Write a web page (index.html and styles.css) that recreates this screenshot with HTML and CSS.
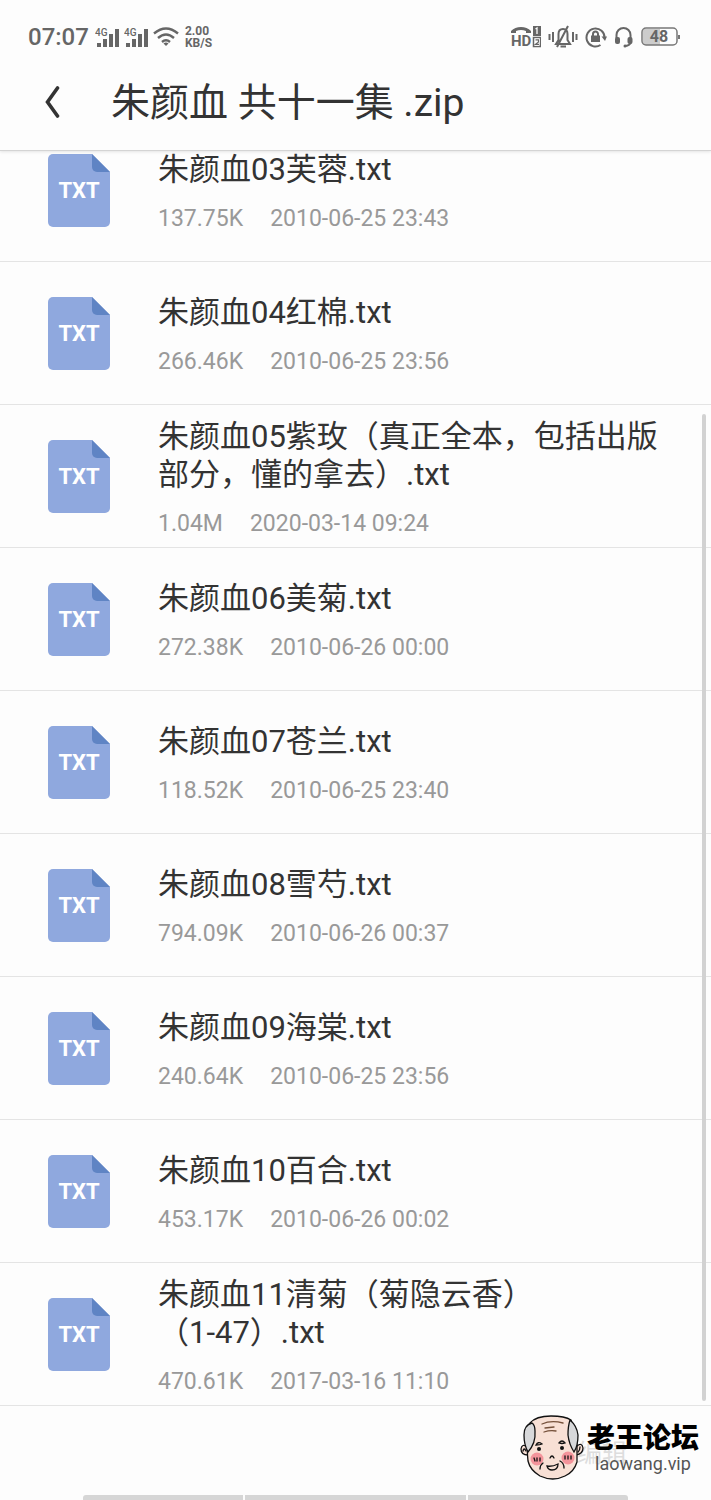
FILE: index.html
```html
<!DOCTYPE html>
<html lang="zh-CN">
<head>
    <meta charset="UTF-8">
    <meta name="viewport" content="width=device-width, initial-scale=1.0">
    <title>朱颜血 共十一集 .zip</title>
    <link rel="stylesheet" href="styles.css">
</head>
<body>
    <svg class="defs" aria-hidden="true">
        <symbol id="file" viewBox="0 0 62 73">
            <path d="M5 0H44L62 18V68a5 5 0 0 1-5 5H5a5 5 0 0 1-5-5V5a5 5 0 0 1 5-5z" fill="#8fa8de"/>
            <path d="M44 0L62 18H49a5 5 0 0 1-5-5z" fill="#5f84c4"/>
        </symbol>
    </svg>

    <header class="top">
        <div class="status">
            <span class="clock">07:07</span>
            <svg class="signal" viewBox="0 0 24 22" fill="#666">
                <path d="M2 17h4v4h-4zM8 13h4v8h-4zM14 8h4v13h-4zM20 3h4v18h-4z"/>
                <text x="0" y="10" font-size="10" font-weight="500">4G</text>
            </svg>
            <svg class="signal" viewBox="0 0 24 22" fill="#666">
                <path d="M2 17h4v4h-4zM8 13h4v8h-4zM14 8h4v13h-4zM20 3h4v18h-4z"/>
                <text x="0" y="10" font-size="10" font-weight="500">4G</text>
            </svg>
            <svg class="wifi" viewBox="0 0 26 20" fill="none" stroke="#666" stroke-width="2.4">
                <path d="M1 6.500Q13-3.500 25 6.500M5 11Q13 4 21 11M9 15Q13 11.500 17 15"/>
                <path d="M10.500 16.500Q13 14.500 15.500 16.500L13 19z" fill="#666" stroke="none"/>
            </svg>
            <span class="speed">2.00<br>KB/S</span>
            <div class="status-right">
                <svg width="30" height="24" viewBox="0 0 30 24">
                    <path d="M0 8V6Q4 2 10 2T20 6V8H15V6Q10 4 5 6V8z" fill="#666"/>
                    <text x="0" y="21" font-size="15" font-weight="700" fill="#666">HD</text>
                    <rect x="22" y="1" width="8" height="10" fill="#666"/>
                    <rect x="22.500" y="12.500" width="7" height="9" fill="none" stroke="#666" stroke-width="1.500"/>
                    <path d="M24.500 4L26 3V9M24 14.500H28V17H24.500V20H28" fill="none" stroke="#fdfdfd" stroke-width="1.300"/>
                    <path d="M24.500 14.800H27.500V17L24.500 19.300H28" fill="none" stroke="#666" stroke-width="1.200"/>
                </svg>
                <svg width="30" height="24" viewBox="0 0 30 24" fill="none" stroke="#666" stroke-width="2">
                    <path d="M8 19L10.500 15V9Q10.500 4 15 4T19.500 9V15L22 19zM12.500 21.500H18M20 1L9 22"/>
                    <path d="M1.500 9V15M5 7V17M25 7V17M28.500 9V15"/>
                </svg>
                <svg width="22" height="22" viewBox="0 0 22 22" fill="none" stroke="#666" stroke-width="2">
                    <path d="M15.500 19A9 9 0 1 1 19.500 12"/>
                    <path d="M16.500 10.500H22L20 15z" fill="#666" stroke="none"/>
                    <rect x="6" y="9.500" width="9" height="6.500" fill="#666" stroke="none"/>
                    <path d="M8 10V8a2.500 2.500 0 0 1 5 0V10"/>
                </svg>
                <svg width="20" height="22" viewBox="0 0 20 22" fill="none" stroke="#666" stroke-width="2">
                    <path d="M2.500 12V9a7 7 0 0 1 14 0V12M17 16Q16 20 10 20"/>
                    <rect x="1" y="11" width="5" height="7" rx="2" fill="#666" stroke="none"/>
                    <rect x="13.500" y="11" width="5" height="7" rx="2" fill="#666" stroke="none"/>
                    <circle cx="11" cy="20" r="1.500" fill="#666" stroke="none"/>
                </svg>
                <svg width="40" height="20" viewBox="0 0 40 20">
                    <path d="M2 2H19V18H2z" fill="#ccc"/>
                    <rect x="1" y="1" width="35" height="17" rx="4" fill="none" stroke="#777" stroke-width="1.500"/>
                    <path d="M38 8V12" stroke="#777" stroke-width="2"/>
                    <text x="18" y="15" font-size="16" font-weight="700" fill="#666" text-anchor="middle">48</text>
                </svg>
            </div>
        </div>
        <div class="titlebar">
            <button class="back" type="button" aria-label="返回">
                <svg width="16" height="32" viewBox="0 0 16 32"><path d="M13.500 2L3.500 16L13.500 30" fill="none" stroke="#333" stroke-width="3.600" stroke-linecap="round"/></svg>
            </button>
            <h1>朱颜血 共十一集 .zip</h1>
        </div>
    </header>

    <main class="content">
        <ul class="files">
            <li class="file">
                <div class="file-icon"><svg><use href="#file"/></svg><span>TXT</span></div>
                <div class="info">
                    <div class="name">朱颜血03芙蓉.txt</div>
                    <div class="meta"><span>137.75K</span><span>2010-06-25 23:43</span></div>
                </div>
            </li>
            <li class="file">
                <div class="file-icon"><svg><use href="#file"/></svg><span>TXT</span></div>
                <div class="info">
                    <div class="name">朱颜血04红棉.txt</div>
                    <div class="meta"><span>266.46K</span><span>2010-06-25 23:56</span></div>
                </div>
            </li>
            <li class="file">
                <div class="file-icon"><svg><use href="#file"/></svg><span>TXT</span></div>
                <div class="info">
                    <div class="name">朱颜血05紫玫（真正全本，包括出版部分，懂的拿去）.txt</div>
                    <div class="meta"><span>1.04M</span><span>2020-03-14 09:24</span></div>
                </div>
            </li>
            <li class="file">
                <div class="file-icon"><svg><use href="#file"/></svg><span>TXT</span></div>
                <div class="info">
                    <div class="name">朱颜血06美菊.txt</div>
                    <div class="meta"><span>272.38K</span><span>2010-06-26 00:00</span></div>
                </div>
            </li>
            <li class="file">
                <div class="file-icon"><svg><use href="#file"/></svg><span>TXT</span></div>
                <div class="info">
                    <div class="name">朱颜血07苍兰.txt</div>
                    <div class="meta"><span>118.52K</span><span>2010-06-25 23:40</span></div>
                </div>
            </li>
            <li class="file">
                <div class="file-icon"><svg><use href="#file"/></svg><span>TXT</span></div>
                <div class="info">
                    <div class="name">朱颜血08雪芍.txt</div>
                    <div class="meta"><span>794.09K</span><span>2010-06-26 00:37</span></div>
                </div>
            </li>
            <li class="file">
                <div class="file-icon"><svg><use href="#file"/></svg><span>TXT</span></div>
                <div class="info">
                    <div class="name">朱颜血09海棠.txt</div>
                    <div class="meta"><span>240.64K</span><span>2010-06-25 23:56</span></div>
                </div>
            </li>
            <li class="file">
                <div class="file-icon"><svg><use href="#file"/></svg><span>TXT</span></div>
                <div class="info">
                    <div class="name">朱颜血10百合.txt</div>
                    <div class="meta"><span>453.17K</span><span>2010-06-26 00:02</span></div>
                </div>
            </li>
            <li class="file">
                <div class="file-icon"><svg><use href="#file"/></svg><span>TXT</span></div>
                <div class="info">
                    <div class="name">朱颜血11清菊（菊隐云香）<span class="nowrap">（1-47）.txt</span></div>
                    <div class="meta"><span>470.61K</span><span>2017-03-16 11:10</span></div>
                </div>
            </li>
        </ul>
        <div class="scrollbar"></div>
    </main>

    <footer class="bottom">
        <button class="edit" type="button" disabled>编辑</button>
        <div class="nav"><i></i><i class="mid"></i><i></i></div>
        <div class="watermark">
            <svg width="64" height="66" viewBox="0 0 64 66" fill="none" stroke="#111" stroke-width="1.300" stroke-linecap="round">
                <path d="M7 32Q2 28 1 34Q1 40 8 40M57 31Q62 27 63 33Q63 39 56 40" fill="#f8e0d5"/>
                <path d="M10 8Q16 1 31 1Q45 1 51 5Q57 20 57 32V47Q54 57 45 61Q33 67 20 61Q10 55 8 46Q6 28 10 8z" fill="#f8e0d5"/>
                <path d="M12 8Q4 10 4 20Q4 30 8 37Q16 28 15 16Q15 10 12 8zM50 5Q57 11 58 20Q58 31 54 37Q49 29 48 20Q48 11 50 5z" fill="#d7d8da"/>
                <path d="M22 9Q31 5 43 8M25 13L34 12M24 17Q30 15 36 16" stroke="#75503a"/>
                <g fill="#f4949b" stroke="none"><circle cx="17" cy="44" r="6.500"/><circle cx="48" cy="43" r="6.500"/></g>
                <path d="M16 30Q18 26 22 29Q20 30 16 30zM39 28Q42 24 45 28Q42 29 39 28zM30 43Q32 39 34 43M27 51Q32 52 38 49Q38 55 32 55Q28 55 27 51zM23 48Q20 50 20 54M40 46Q44 48 44 53"/>
                <path d="M14 43L15 46M17 43V46M20 43V46M45 41V44M48 41V44M51 41V44M3 36Q4 32 6 36M60 32Q60 35 58 37"/>
                <g fill="#111" stroke="none"><circle cx="19" cy="34" r="2"/><circle cx="42" cy="33" r="2"/></g>
            </svg>
            <div class="brand"><strong>老王论坛</strong><span>laowang.vip</span></div>
        </div>
    </footer>
</body>
</html>
```

FILE: styles.css
```css
* {
    box-sizing: border-box;
}
body {
    margin: 0;
    min-height: 100vh;
    display: flex;
    flex-direction: column;
    background: #fdfdfd;
    color: #333;
    font-family: Roboto, "Noto Sans CJK SC", sans-serif;
}
svg {
    flex: none;
}
.defs {
    position: absolute;
    width: 0;
    height: 0;
}
.top {
    position: sticky;
    top: 0;
    z-index: 1;
    height: 151px;
    background: #fdfdfd;
    border-bottom: 1px solid #d4d4d4;
    box-shadow: 0 1px 3px rgba(0, 0, 0, 0.1);
}
.status {
    display: flex;
    align-items: center;
    padding: 20px 30px 0 28px;
    height: 54px;
    color: #666;
}
.clock {
    font-size: 24px;
    font-weight: 500;
    margin-right: 6px;
}
.signal {
    width: 24px;
    height: 22px;
    margin-right: 5px;
}
.wifi {
    width: 26px;
    height: 20px;
    margin-right: 6px;
}
.speed {
    font-size: 12px;
    line-height: 12px;
    font-weight: 700;
}
.status-right {
    display: flex;
    align-items: center;
    gap: 7px;
    margin-left: auto;
}
.titlebar {
    display: flex;
    align-items: center;
    height: 96px;
    padding-left: 44px;
}
.back {
    display: flex;
    padding: 0;
    border: none;
    background: none;
    cursor: pointer;
}
h1 {
    margin: 2px 0 0 51px;
    font-size: 39px;
    line-height: 48px;
    font-weight: 400;
}
.content {
    position: relative;
    margin-top: -32px;
}
.files {
    margin: 0;
    padding: 0;
    list-style: none;
}
.file {
    display: flex;
    align-items: center;
    min-height: 143px;
    padding: 0 40px 0 48px;
    border-bottom: 1px solid #e4e4e4;
}
.file-icon {
    display: grid;
    place-items: center;
    margin-right: 48px;
    color: #fff;
    font-size: 22px;
    font-weight: 700;
}
.file-icon svg,
.file-icon span {
    grid-area: 1 / 1;
}
.file-icon svg {
    width: 62px;
    height: 73px;
}
.info {
    flex: 1;
    padding-top: 4px;
}
.name {
    font-size: 31px;
    line-height: 38px;
    text-spacing-trim: space-all;
}
.nowrap {
    white-space: nowrap;
}
.meta {
    display: flex;
    gap: 27px;
    margin-top: 16px;
    font-size: 23px;
    line-height: 28px;
    color: #999;
}
.scrollbar {
    position: absolute;
    top: 295px;
    right: 5px;
    bottom: 5px;
    width: 4px;
    border-radius: 2px;
    background: #d2d2d2;
}
.bottom {
    position: relative;
    flex: 1;
    display: flex;
    flex-direction: column;
    justify-content: space-between;
    min-height: 94px;
}
.edit {
    align-self: flex-end;
    margin: 29px 84px 0 0;
    padding: 0;
    border: none;
    background: none;
    font-family: inherit;
    font-size: 25px;
    line-height: 38px;
    color: #ddd;
}
.nav {
    display: flex;
    gap: 2px;
    height: 5px;
    margin: 0 83px;
}
.nav i {
    flex: 160;
    background: #d6d6d6;
}
.nav .mid {
    flex: 221;
}
.nav i:first-child {
    border-top-left-radius: 3px;
}
.nav i:last-child {
    border-top-right-radius: 3px;
}
.watermark {
    position: absolute;
    right: 12px;
    top: 9px;
    display: flex;
    gap: 3px;
}
.brand {
    display: flex;
    flex-direction: column;
    align-items: center;
    color: #555;
    font-size: 18px;
    line-height: 20px;
}
.brand strong {
    margin-top: 9px;
    color: #000;
    font-size: 28px;
    line-height: 30px;
    font-weight: 900;
}
```
